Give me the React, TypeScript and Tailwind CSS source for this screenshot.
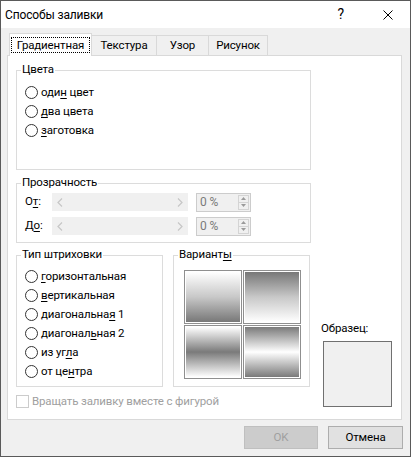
import React from 'react';

const font = { fontFamily: 'Roboto, "Liberation Sans", sans-serif' };

function U({ children }: { children: React.ReactNode }) {
  return <span className="underline underline-offset-[2px]">{children}</span>;
}

function Radio({ children }: { children: React.ReactNode }) {
  return (
    <div className="flex h-[19px] items-center">
      <span className="h-[13px] w-[13px] shrink-0 rounded-full border border-[#333333] bg-white" />
      <span className="ml-[3px] leading-[15px] text-black">{children}</span>
    </div>
  );
}

function Group({ title, className, children }: { title: React.ReactNode; className: string; children?: React.ReactNode }) {
  return (
    <div className={`relative border border-[#dcdcdc] ${className}`}>
      <span className="absolute -top-[9px] left-[4px] bg-white px-[1px] leading-[15px] text-black">{title}</span>
      {children}
    </div>
  );
}

function Chevron({ dir }: { dir: 'l' | 'r' }) {
  return (
    <svg width="6" height="9" viewBox="0 0 6 9">
      <path d={dir === 'l' ? 'M5 0.5 L1 4.5 L5 8.5' : 'M1 0.5 L5 4.5 L1 8.5'} fill="none" stroke="#c6c6c6" strokeWidth="1.2" />
    </svg>
  );
}

function TransRow({ label }: { label: React.ReactNode }) {
  return (
    <div className="flex h-[24px] items-center">
      <span className="w-[27px] text-black">{label}</span>
      <div className="flex h-[18px] w-[136px] items-center justify-between bg-[#f0f0f0] px-[5px]">
        <Chevron dir="l" />
        <Chevron dir="r" />
      </div>
      <div className="ml-[8px] flex h-[19px] w-[55px] border border-[#cccccc] bg-[#f0f0f0]">
        <span className="flex-1 pl-[3px] text-[12px] leading-[17px] text-[#7a7a7a]">0 %</span>
        <div className="m-[1px] flex w-[11px] flex-col border border-[#d4d4d4] bg-[#f0f0f0]">
          <div className="flex flex-1 items-center justify-center border-b border-[#d4d4d4]">
            <svg width="5" height="3" viewBox="0 0 5 3"><path d="M0 3 L2.5 0 L5 3 Z" fill="#9a9a9a" /></svg>
          </div>
          <div className="flex flex-1 items-center justify-center">
            <svg width="5" height="3" viewBox="0 0 5 3"><path d="M0 0 L2.5 3 L5 0 Z" fill="#9a9a9a" /></svg>
          </div>
        </div>
      </div>
    </div>
  );
}

function Tile({ bg }: { bg: string }) {
  return (
    <div className="h-[54px] w-[58px] border border-[#8f8f8f] bg-white p-[1px]">
      <div className={`h-full w-full ${bg}`} />
    </div>
  );
}

export default function App() {
  return (
    <div className="flex h-[457px] w-[411px] flex-col border border-[#5a5a5a] bg-[#f0f0f0] text-[11.5px] tracking-[-0.15px]" style={font}>
      <div className="flex h-[27px] shrink-0 items-center bg-white pl-[4px]">
        <span className="text-[12px] text-black">Способы заливки</span>
        <span className="ml-auto mr-[39px] text-[14px] text-black">?</span>
        <svg width="10" height="10" viewBox="0 0 10 10" className="mr-[17px]">
          <path d="M0.5 0.5 L9.5 9.5 M9.5 0.5 L0.5 9.5" stroke="#000" strokeWidth="1" />
        </svg>
      </div>

      <div className="mt-[5px] flex h-[22px] items-end pl-[8px]">
        <div className="relative z-10 -mb-[1px] flex h-[23px] w-[83px] items-center justify-center border-x border-t border-[#d9d9d9] bg-white">
          <span className="border border-dotted border-black px-[5px] leading-[14px] text-black">Градиентная</span>
        </div>
        <div className="flex h-[20px] w-[65px] items-center justify-center border-r border-t border-[#d9d9d9] text-black">Текстура</div>
        <div className="flex h-[20px] w-[52px] items-center justify-center border-r border-t border-[#d9d9d9] text-black">Узор</div>
        <div className="flex h-[20px] w-[59px] items-center justify-center border-r border-t border-[#d9d9d9] text-black">Рисунок</div>
      </div>

      <div className="ml-[6px] flex h-[365px] w-[395px] flex-col border border-[#d9d9d9] bg-white pl-[8px] pt-[14px]">
        <Group title="Цвета" className="h-[100px] w-[295px] pl-[8px] pt-[12px]">
          <Radio>оди<U>н</U> цвет</Radio>
          <Radio><U>д</U>ва цвета</Radio>
          <Radio><U>з</U>аготовка</Radio>
        </Group>

        <Group title="Прозрачность" className="mt-[13px] h-[60px] w-[295px] pl-[8px] pt-[6px]">
          <TransRow label={<>О<U>т</U>:</>} />
          <TransRow label={<>Д<U>о</U>:</>} />
        </Group>

        <div className="mt-[12px] flex items-start">
          <div className="flex flex-col">
            <div className="flex">
              <Group title="Тип штриховки" className="h-[132px] w-[147px] pl-[8px] pt-[11px]">
                <Radio><U>г</U>оризонтальная</Radio>
                <Radio><U>в</U>ертикальная</Radio>
                <Radio>диагональна<U>я</U> 1</Radio>
                <Radio>диагонал<U>ь</U>ная 2</Radio>
                <Radio>из уг<U>л</U>а</Radio>
                <Radio>от це<U>н</U>тра</Radio>
              </Group>

              <Group title={<>Вариант<U>ы</U></>} className="ml-[10px] h-[132px] w-[137px] pl-[10px] pt-[14px]">
                <div className="grid w-[117px] grid-cols-2 gap-[1px]">
                  <Tile bg="bg-gradient-to-b from-white via-[#c8c8c8] to-[#787878]" />
                  <Tile bg="bg-gradient-to-b from-[#787878] via-[#c8c8c8] to-white" />
                  <Tile bg="bg-[linear-gradient(to_bottom,#ffffff,#7a7a7a_50%,#ffffff)]" />
                  <Tile bg="bg-[linear-gradient(to_bottom,#7a7a7a,#ffffff_50%,#7a7a7a)]" />
                </div>
              </Group>
            </div>

            <div className="mt-[7px] flex items-center">
              <span className="h-[13px] w-[13px] border border-[#cccccc] bg-white" />
              <span className="ml-[3px] leading-[15px] text-[#a0a0a0]">Вращать заливку вместе с фигурой</span>
            </div>
          </div>

          <div className="ml-[10px] flex flex-col pt-[66px]">
            <span className="ml-[1px] leading-[15px] text-black">Образец:</span>
            <div className="ml-[3px] mt-[5px] h-[66px] w-[69px] border border-[#707070] bg-[#f0f0f0]" />
          </div>
        </div>
      </div>

      <div className="mt-[6px] flex justify-end gap-[10px] pr-[7px]">
        <div className="flex h-[23px] w-[74px] items-center justify-center border border-[#bfbfbf] bg-[#cccccc] text-[#a0a0a0]">OK</div>
        <div className="flex h-[23px] w-[75px] items-center justify-center border border-[#adadad] bg-[#e1e1e1] text-black">Отмена</div>
      </div>
    </div>
  );
}
